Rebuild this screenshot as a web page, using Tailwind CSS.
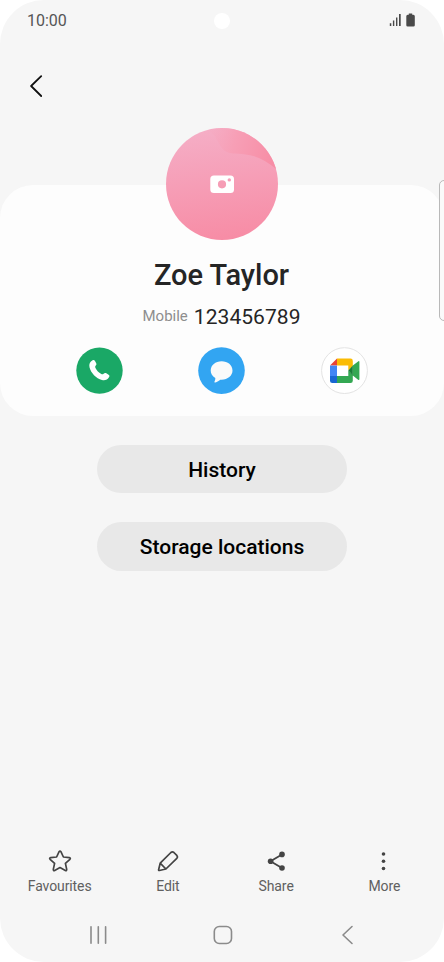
<!DOCTYPE html>
<html lang="en">
<head>
<meta charset="utf-8">
<title>Zoe Taylor</title>
<script src="https://cdn.jsdelivr.net/npm/@tailwindcss/browser@4"></script>
</head>
<body class="bg-white font-['Roboto',sans-serif]">
<div class="relative flex h-[962px] w-[444px] flex-col overflow-hidden rounded-[44px] bg-[#f6f6f6]">
  <header class="grid h-10 shrink-0 grid-cols-3 items-center pr-[28px] pl-[27px] text-[#555]">
    <span class="pt-px text-[16px] leading-5">10:00</span>
    <span class="mt-[2px] ml-px size-4 justify-self-center rounded-full bg-white"></span>
    <svg class="justify-self-end" width="27" height="14" viewBox="0 0 27 14" fill="#4a4a4a"><path d="M.8 10.200h1.500V13H.8zM3.900 7.500h1.400V13H3.900zM7 4.500h1.400V13H7zM10 1h1.700v12H10z"/><path d="M19.800.4h3.400v1.400h1.200q1.400 0 1.400 1.500v8.900q0 1.400-1.400 1.400h-5.700q-1.400 0-1.400-1.400V3.300q0-1.500 1.400-1.500h1.100z"/></svg>
  </header>

  <nav class="flex h-[145px] shrink-0 items-start pt-[34px] pl-[29px]">
    <svg width="15" height="24" viewBox="0 0 15 24" fill="none" stroke="#111" stroke-width="1.800" stroke-linecap="round" stroke-linejoin="round"><path d="M12.200 2.200 2.100 12l10.100 10"/></svg>
  </nav>

  <main class="flex h-[231px] shrink-0 flex-col items-center rounded-[33px] bg-[#fdfdfd]">
    <svg class="-mt-[57px] shrink-0" width="112" height="112" viewBox="0 0 112 112">
      <defs>
        <linearGradient id="base" x1=".4" y1="0" x2=".53" y2="1"><stop stop-color="#f5aec6"/><stop offset="1" stop-color="#f78ca5"/></linearGradient>
        <linearGradient id="fold" x1="0" y1="0" x2="1" y2=".15"><stop stop-color="#f6a9c0" stop-opacity="0"/><stop offset=".45" stop-color="#f79fb6"/><stop offset="1" stop-color="#f78ea6"/></linearGradient>
        <clipPath id="disc"><circle cx="56" cy="56" r="56"/></clipPath>
      </defs>
      <g clip-path="url(#disc)"><path fill="url(#base)" d="M0 0h112v112H0z"/><path fill="url(#fold)" d="M38 0C52 6 52 18 59 23c5 3 11 2.500 19 3.200C91 27.500 101 33 110 41l2-2V0z"/></g>
      <path fill="#fff" fill-rule="evenodd" d="M48 47.500h16.500q3.500 0 3.500 3.500v10.500q0 3.500-3.500 3.500H48q-3.700 0-3.700-3.500V51q0-3.500 3.700-3.500zM56 52.200a4.100 4.100 0 1 0 0 8.200 4.100 4.100 0 0 0 0-8.200zM63.300 50.200a1.700 1.700 0 1 0 0 3.400 1.700 1.700 0 0 0 0-3.400z"/>
    </svg>
    <h1 class="mt-[17px] mr-px text-[29px] leading-9 font-medium text-[#252525]">Zoe Taylor</h1>
    <p class="mt-[9px] mr-px flex h-[28px] items-center gap-[6px]"><span class="pt-px text-[15px] text-[#8e8e8e]">Mobile</span><span class="pt-[3px] text-[21px] tracking-[.05px] text-[#252525]">123456789</span></p>
    <div class="mt-[17px] mr-px flex gap-[75.500px]">
      <svg width="47" height="48" viewBox="0 0.400 47 48"><circle cx="23.500" cy="24" r="23.200" fill="#1aa866"/><path d="M16.600 13.600c.9-.5 1.900-.2 2.400.7l1.200 2.300c.5.900.2 1.700-.4 2.400-.7.800-.8 1.500-.3 2.500 1.200 2.600 3.200 4.600 5.800 5.900.9.500 1.600.4 2.300-.3.800-.8 1.700-1 2.700-.4l2.300 1.400c.9.600 1.100 1.500.5 2.400-1.500 2.600-4.100 3.800-7.100 3-5.900-1.600-11.200-7.300-12.500-12.900-.7-3 .5-5.700 3.100-7z" fill="#fff"/></svg>
      <svg width="47" height="48" viewBox="0 0.400 47 48"><circle cx="23.500" cy="24" r="23.300" fill="#32a5f2"/><path d="M23.600 14.700c-6.200 0-10.900 4-10.900 9.300 0 3.100 1.600 5.800 4.600 7.400.1 1.400-.3 2.600-.8 3.500-.3.700.2 1.100.8.900 2-.6 3.800-1.500 5-2.700 6.900.5 12.200-3.600 12.200-9.100s-4.700-9.300-10.900-9.300z" fill="#fafafa"/></svg>
      <svg width="47" height="48" viewBox="0 0.400 47 48"><circle cx="23.500" cy="24" r="22.900" fill="#fff" stroke="#e3e3e3"/><path fill="#ea4335" d="M9 19l7-7v7z"/><path fill="#fbbc04" d="M16 12h13.500q2.300 0 2.300 2.300V19.500L27.300 24v-5H16z"/><path fill="#4285f4" d="M9 19h7v10.500H9z"/><path fill="#1967d2" d="M9 29.500h7v7h-4.700Q9 36.500 9 34.200z"/><path fill="#34a853" d="M16 29.500h11.300V24l4.500 4.500v5.700q0 2.300-2.300 2.300H16zM31.800 19l5.300-4.200q1.300-.9 1.300.7v17q0 1.500-1.300.6l-5.300-4.200z"/><path fill="#188038" d="M27.300 24l4.500-5v10z"/></svg>
    </div>
  </main>

  <section class="mt-[29px] flex flex-col items-center gap-[29px] font-medium text-black">
    <button class="h-[48px] w-[250px] rounded-full bg-[#e8e8e8] pt-[3px] text-[21px]">History</button>
    <button class="h-[49px] w-[250px] rounded-full bg-[#e8e8e8] pt-[2px] text-[21px]">Storage locations</button>
  </section>

  <footer class="mt-auto">
    <div class="mx-auto grid w-[433px] grid-cols-4 text-[14px] leading-5 tracking-[-.1px] text-[#606060]">
      <div class="flex flex-col items-center gap-[3px]">
        <svg width="24" height="24" viewBox="0 0 24 24" fill="none" stroke="#444" stroke-width="1.700" stroke-linejoin="round"><path d="M11.100 2.700q.9-1.400 1.800 0l2.500 5.300 5.900.7q1.700.4.600 1.600l-4.500 4.100 1.300 6q.1 1.700-1.400 1L12 18.600l-5.300 2.800q-1.500.7-1.400-1l1.300-6L2.100 10.300Q1 9.100 2.700 8.700l5.900-.7z"/></svg>
        <span>Favourites</span>
      </div>
      <div class="flex flex-col items-center gap-[3px]">
        <svg width="24" height="24" viewBox="0 0 24 24" fill="none" stroke="#444" stroke-width="1.700" stroke-linejoin="round"><path d="M4.200 14.200 14.900 3.500q1.500-1.300 3 0l2.900 2.900q1.300 1.500 0 3L9.900 20l-6.500 1.500q-1 .1-.8-.8zM4.200 14.200 9.900 20"/></svg>
        <span>Edit</span>
      </div>
      <div class="flex flex-col items-center gap-[3px]">
        <svg width="24" height="24" viewBox="0 0 24 24" fill="#444"><path d="M18 5.400 6.500 12.200 18 19" fill="none" stroke="#444" stroke-width="1.800"/><circle cx="18" cy="5.400" r="2.800"/><circle cx="6.600" cy="12.200" r="2.800"/><circle cx="18" cy="19" r="2.800"/></svg>
        <span>Share</span>
      </div>
      <div class="flex flex-col items-center gap-[3px]">
        <svg width="24" height="24" viewBox="0 0 24 24" fill="#444"><circle cx="11.500" cy="5" r="1.800"/><circle cx="11.500" cy="12.200" r="1.800"/><circle cx="11.500" cy="19.500" r="1.800"/></svg>
        <span>More</span>
      </div>
    </div>
    <div class="flex h-[66px] items-center justify-center gap-[101px] pt-[12px] pl-[2px]">
      <svg width="24" height="22" viewBox="0 0 24 22" fill="none" stroke="#8b8b8b" stroke-width="1.600" stroke-linecap="round"><path d="M5 2.800v16.400M12.300 2.800v16.400M19.600 2.800v16.400"/></svg>
      <svg width="24" height="22" viewBox="0 0 24 22" fill="none" stroke="#8b8b8b" stroke-width="1.600"><rect x="3.300" y="2.500" width="17.200" height="17" rx="5"/></svg>
      <svg width="24" height="22" viewBox="0 0 24 22" fill="none" stroke="#8b8b8b" stroke-width="1.600" stroke-linecap="round" stroke-linejoin="round"><path d="M16 2.500 7 11l9 8.500"/></svg>
    </div>
  </footer>
  <div class="absolute top-[180px] left-[438.500px] h-[141px] w-3 rounded-[5px] border-[1.500px] border-[#b9b9b9] bg-[#fafafa]"></div>
</div>
</body>
</html>
